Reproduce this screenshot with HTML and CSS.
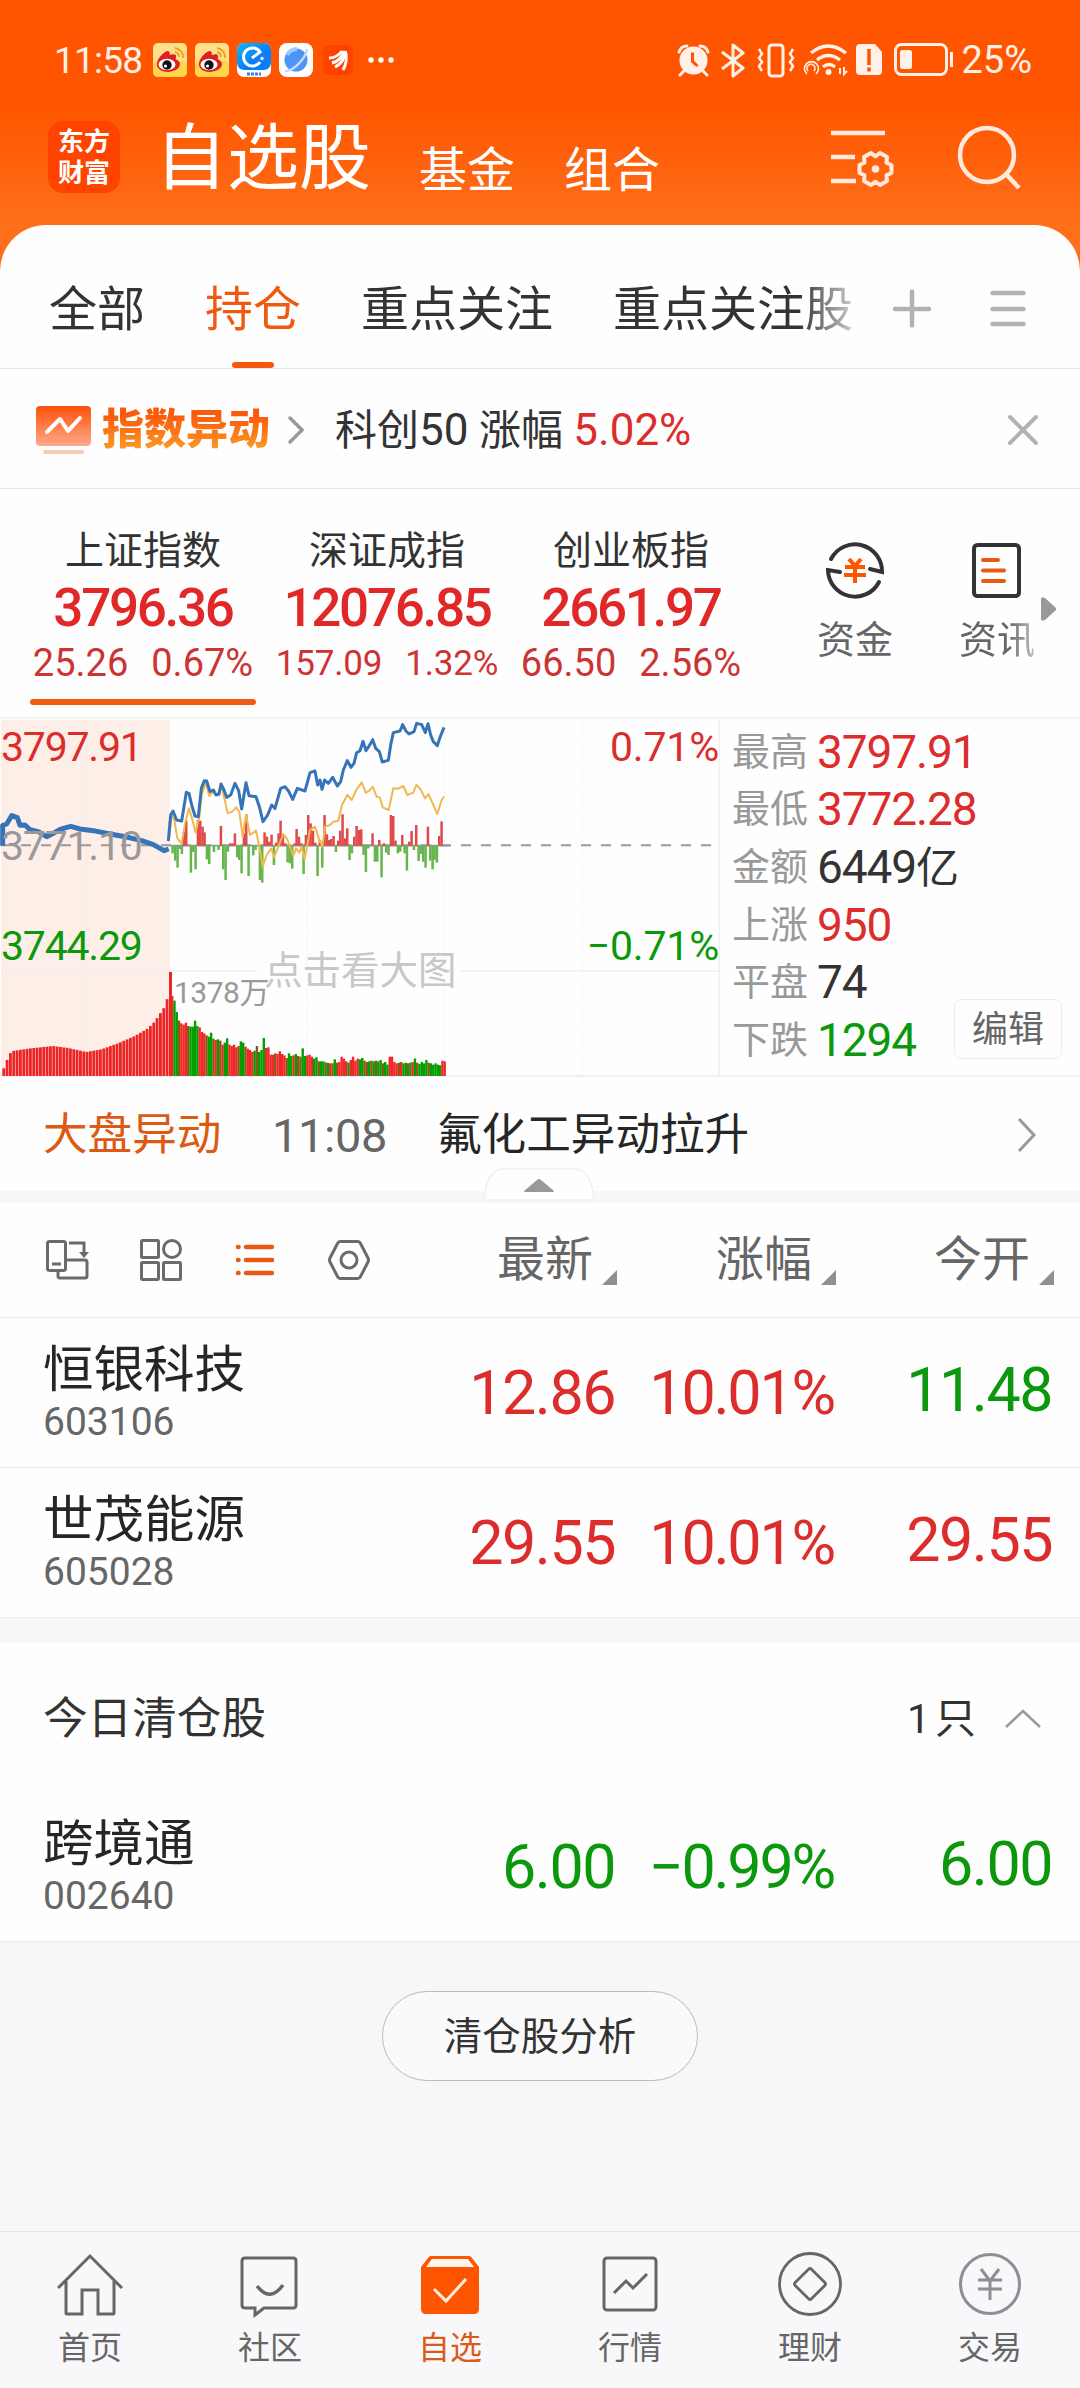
FILE: index.html
```html
<!DOCTYPE html>
<html lang="zh-CN">
<head>
    <meta charset="UTF-8">
    <meta name="viewport" content="width=device-width, initial-scale=1.0">
    <title>自选股</title>
    <link rel="stylesheet" href="styles.css">
</head>
<body>
    <div class="header">
        <div class="status-bar">
            <span class="status-time">11:58</span>
            <div class="status-apps">
                <svg width="34" height="34" viewBox="0 0 34 34">
                    <rect width="34" height="34" rx="5" fill="#ffe08a"/>
                    <rect y="18" width="34" height="16" rx="5" fill="#ffd54a"/>
                    <path d="M22 5a9 9 0 0 1 8 10M22 9a5 5 0 0 1 4 5" fill="none" stroke="#f0a020" stroke-width="2"/>
                    <path d="M4 20c1-6 8-12 11-12 3 1 1 4 2 4 3-1 6-1 6 1s-1 3 1 4c6 3 3 11-9 12C8 29 3 25 4 20z" fill="#e01f22"/>
                    <ellipse cx="14" cy="21.500" rx="8.500" ry="5.800" fill="#fff"/>
                    <circle cx="14" cy="22" r="4.700" fill="#111"/>
                    <circle cx="12.500" cy="23" r="1.600" fill="#fff"/>
                </svg>
                <svg width="34" height="34" viewBox="0 0 34 34">
                    <rect width="34" height="34" rx="5" fill="#ffe08a"/>
                    <rect y="18" width="34" height="16" rx="5" fill="#ffd54a"/>
                    <path d="M22 5a9 9 0 0 1 8 10M22 9a5 5 0 0 1 4 5" fill="none" stroke="#f0a020" stroke-width="2"/>
                    <path d="M4 20c1-6 8-12 11-12 3 1 1 4 2 4 3-1 6-1 6 1s-1 3 1 4c6 3 3 11-9 12C8 29 3 25 4 20z" fill="#e01f22"/>
                    <ellipse cx="14" cy="21.500" rx="8.500" ry="5.800" fill="#fff"/>
                    <circle cx="14" cy="22" r="4.700" fill="#111"/>
                    <circle cx="12.500" cy="23" r="1.600" fill="#fff"/>
                </svg>
                <svg width="34" height="34" viewBox="0 0 34 34">
                    <defs>
                        <linearGradient id="blueApp" x1="0" y1="0" x2="1" y2="1">
                            <stop offset="0" stop-color="#0cb8f5"/>
                            <stop offset="0.600" stop-color="#0a7df8"/>
                        </linearGradient>
                    </defs>
                    <rect width="34" height="34" rx="7" fill="#fff"/>
                    <path d="M0 7a7 7 0 0 1 7-7h20a7 7 0 0 1 7 7v12q0 7-7 8H7q-7-1-7-8z" fill="url(#blueApp)"/>
                    <path d="M15 15l8-6a9 9 0 1 0 0 10" fill="none" stroke="#fff" stroke-width="3"/>
                    <circle cx="25" cy="15.500" r="1.700" fill="#fff"/>
                    <path d="M10 31h14" stroke="#2c8ad8" stroke-width="3" stroke-dasharray="3 1"/>
                </svg>
                <svg width="34" height="34" viewBox="0 0 34 34">
                    <rect width="34" height="34" rx="8" fill="#fff"/>
                    <circle cx="17" cy="17" r="11.500" fill="#4c94f5"/>
                    <path d="M8 12a12 12 0 0 1 10-6" stroke="#9cc8ff" stroke-width="4" fill="none"/>
                    <path d="M6 28c7 1 21-12 22-22" stroke="#c5dcff" stroke-width="2.500" fill="none"/>
                </svg>
                <svg width="34" height="34" viewBox="0 0 34 34">
                    <rect x="2" y="2" width="30" height="30" rx="6" fill="#ff4200"/>
                    <g fill="none" stroke="#fff" stroke-width="3">
                        <path d="M8 15q8 0 13-7"/>
                        <path d="M11 20q9-2 12-12"/>
                        <path d="M14 24q9-4 10.500-16"/>
                        <path d="M22 27q5-9 2.500-18"/>
                    </g>
                </svg>
                <svg width="34" height="34" viewBox="0 0 34 34">
                    <g fill="#fff"><circle cx="8" cy="17" r="2.700"/><circle cx="18" cy="17" r="2.700"/><circle cx="28" cy="17" r="2.700"/></g>
                </svg>
            </div>
            <div class="status-right">
                <!-- alarm, bluetooth, vibrate, wifi, sim, battery -->
                <svg width="278" height="36" viewBox="677 42 278 36" fill="none" stroke="#fff1e8" stroke-width="3">
                    <circle cx="693.500" cy="60.500" r="14" fill="#fff1e8" stroke="none"/>
                    <path d="M679 52q2-6 8-6M708 52q-2-6-8-6M684 71l-4 4M703 71l4 4" stroke-linecap="round"/>
                    <path d="M692.500 52.500v9l5 4.500" stroke="#ff5500"/>
                    <path d="M722 52l21 16-10 8V45l10 8-21 16" stroke-linejoin="round"/>
                    <rect x="769" y="45" width="14" height="31" rx="3"/>
                    <path d="M759 49l3 5-3 4 3 4-3 4 3 5M793 49l-3 5 3 4-3 4 3 4-3 5" stroke-width="2.500"/>
                    <path d="M811 53q17-14 35 0M817 60q11-9 23 0M823 67q6-5 12 0" stroke-width="3.200"/>
                    <circle cx="828.500" cy="72" r="3" fill="#fff1e8" stroke="none"/>
                    <path d="M807 74a7 7 0 1 1 9 0M808 71a4 4 0 1 1 6 0" stroke-width="1.600"/>
                    <path d="M840 68v6M844 67v7l3-3" stroke-width="2"/>
                    <path d="M860 44h15l7 8v19a4 4 0 0 1-4 4h-18a4 4 0 0 1-4-4V48a4 4 0 0 1 4-4z" fill="#fff1e8" stroke="none"/>
                    <path d="M869 49v16M869 67.500v4" stroke="#ff5500" stroke-width="3.500"/>
                    <rect x="895.500" y="44.500" width="51" height="30" rx="6"/>
                    <rect x="900" y="50" width="12" height="19" rx="2.500" fill="#fff1e8" stroke="none"/>
                    <path d="M951.500 52v15"/>
                </svg>
                <span>25%</span>
            </div>
        </div>
        <div class="title-bar">
            <div class="logo"><span>东方</span><span>财富</span></div>
            <div class="titles">
                <span class="title-main">自选股</span>
                <span>基金</span>
                <span>组合</span>
            </div>
            <div class="title-icons">
                <svg width="64" height="64" viewBox="830 125 64 64" fill="none" stroke="#ffe9dc" stroke-width="4.500">
                    <path d="M831 133h54M831 157h24M831 181h25"/>
                    <path d="M16 4L11 6.300 11.500 12 4.500 16 0 12.700-4.500 16-11.500 12-11 6.300-16 4v-8L-11-6.300-11.500-12-4.500-16 0-12.700 4.500-16 11.500-12 11-6.300 16-4z" transform="translate(875.500 169)" stroke-width="4" stroke-linejoin="round"/>
                    <circle cx="875.500" cy="169" r="3.800" fill="#ffe9dc" stroke="none"/>
                </svg>
                <svg width="64" height="66" viewBox="957 123 64 66" fill="none" stroke="#ffe9dc" stroke-width="4.500">
                    <circle cx="987" cy="154" r="27"/>
                    <path d="M1006 173l13 14"/>
                </svg>
            </div>
        </div>
    </div>

    <div class="card">
        <div class="tabs">
            <div class="tab-list">
                <span>全部</span>
                <span class="active">持仓</span>
                <span>重点关注</span>
                <span>重点关注股</span>
            </div>
            <svg width="140" height="42" viewBox="890 288 140 42" fill="none" stroke="#b2b2b2" stroke-width="4.500" stroke-linecap="round">
                <path d="M895 309h34M912 291.500v34"/>
                <path d="M992.500 293h31M992.500 309h31M992.500 324h31"/>
            </svg>
        </div>

        <div class="notice">
            <svg width="55" height="50" viewBox="0 0 55 50">
                <defs>
                    <linearGradient id="noticeBg" x1="0" y1="0" x2="0" y2="1">
                        <stop offset="0" stop-color="#fb5207"/>
                        <stop offset="1" stop-color="#ffa98c"/>
                    </linearGradient>
                </defs>
                <rect y="1" width="55" height="40" rx="4" fill="url(#noticeBg)"/>
                <path d="M11 27l13-13 8 12 12-13" fill="none" stroke="#fff" stroke-width="4" stroke-linecap="round" stroke-linejoin="round"/>
                <path d="M9 47h37" stroke="#f8cab8" stroke-width="4" stroke-linecap="round"/>
            </svg>
            <span class="notice-title">指数异动</span>
            <svg width="18" height="30" viewBox="0 0 18 30" fill="none" stroke="#999" stroke-width="3.500" stroke-linecap="round">
                <path d="M3 3l12 12L3 27"/>
            </svg>
            <div class="notice-text">科创<span class="num">50</span> 涨幅 <span class="num red">5.02%</span></div>
            <svg width="32" height="32" viewBox="0 0 32 32" stroke="#b2b2b2" stroke-width="4" stroke-linecap="round">
                <path d="M3 3l26 26M29 3L3 29"/>
            </svg>
        </div>

        <div class="indexes">
            <div class="index active">
                <div class="index-name">上证指数</div>
                <div class="index-value">3796.36</div>
                <div class="index-change"><span>25.26</span><span>0.67%</span></div>
            </div>
            <div class="index">
                <div class="index-name">深证成指</div>
                <div class="index-value">12076.85</div>
                <div class="index-change small"><span>157.09</span><span>1.32%</span></div>
            </div>
            <div class="index">
                <div class="index-name">创业板指</div>
                <div class="index-value">2661.97</div>
                <div class="index-change"><span>66.50</span><span>2.56%</span></div>
            </div>
            <div class="shortcut">
                <svg width="62" height="62" viewBox="0 0 62 62" fill="none" stroke="#333" stroke-width="4">
                    <path d="M7 20A27 27 0 0 1 58 33l-12-3" stroke-linecap="round"/>
                    <path d="M55 43A27 27 0 0 1 4 31l12 2" stroke-linecap="round"/>
                    <path d="M25 20l6 7 6-7M21 28h20M20 36h22M31 27v17" stroke="#ff5500" stroke-width="4"/>
                </svg>
                <span>资金</span>
            </div>
            <div class="shortcut">
                <svg width="62" height="62" viewBox="0 0 62 62" fill="none" stroke="#333" stroke-width="4">
                    <rect x="8" y="6" width="45" height="51" rx="3.500"/>
                    <path d="M17 21h15M17 31.500h21M17 42h21" stroke="#e85a14" stroke-linecap="round"/>
                </svg>
                <span class="fade">资讯</span>
            </div>
            <svg class="more" width="16" height="26" viewBox="0 0 16 26"><path d="M0 3q0-3 4-1l11 10v2L4 24q-4 2-4-1z" fill="#999"/></svg>
        </div>

        <div class="market">
            <div class="chart">
                <svg id="chart" width="720" height="358" viewBox="0 57 2160 1074">
                    <rect x="3" y="60" width="507" height="1068" fill="#fdeee8"/>
                    <path d="M260 60V1128M921 60V1128M1334 60V1128M1746 60V1128" stroke="#e8e8e8" stroke-width="3" stroke-dasharray="3 6"/>
                    <path d="M3 813H772M1382 813H2160M0 1128H2160M2158 57V1128" stroke="#efefef" stroke-width="5"/>
                    <path d="M3 436H2140" stroke="#999" stroke-width="6" stroke-dasharray="30 30"/>
                    <g id="volume"></g>
                    <path d="M510 437H1352" stroke="#999" stroke-width="5"/>
                    <g id="flow"></g>
                    <path d="M507 420L515 345L523 360L532 415L545 430L555 370L567 325L576 355L587 398L598 350L606 280L617 250L628 288L640 275L652 285L663 255L672 290L683 340L697 335L708 322L718 335L728 410L738 345L750 405L768 392L778 440L788 500L800 465L814 445L822 472L835 440L850 402L862 418L880 468L888 445L898 458L905 440L914 478L930 390L945 380L958 420L967 440L975 380L990 375L1000 365L1015 362L1026 315L1042 285L1055 300L1070 268L1085 247L1097 278L1108 272L1118 260L1130 290L1140 293L1148 322L1166 330L1180 265L1195 266L1210 258L1222 285L1240 278L1249 255L1262 268L1275 295L1285 282L1298 310L1312 342L1325 300L1332 290" fill="none" stroke="#f0b84e" stroke-width="6" stroke-linejoin="round"/>
                    <path d="M8 437V376L20 372L35 347L52 353L60 376L75 375L88 388L115 395L140 410L160 400L180 388L212 379L240 387L280 392L330 402L380 411L425 422L460 434L492 452L506 447" fill="none" stroke="#3674b9" stroke-width="15" stroke-linejoin="round"/>
                    <path d="M505 423L512 345L519 333L530 360L545 363L552 320L559 277L567 280L575 315L585 348L595 350L604 265L613 242L620 243L630 275L640 270L648 285L657 283L663 252L672 270L680 292L692 285L705 250L716 272L725 327L738 248L747 287L768 290L778 320L789 365L803 345L815 315L825 325L842 265L855 260L865 272L878 298L892 265L915 273L930 218L945 213L953 255L960 240L966 268L974 240L985 250L998 232L1012 258L1022 245L1030 210L1042 182L1053 202L1062 190L1070 158L1080 152L1089 124L1098 152L1108 137L1118 119L1127 145L1138 155L1147 186L1165 181L1173 130L1180 98L1200 93L1208 74L1218 93L1227 102L1242 95L1250 70L1265 74L1276 98L1284 71L1292 105L1300 125L1312 137L1320 112L1332 82" fill="none" stroke="#3674b9" stroke-width="9" stroke-linejoin="round"/>
                </svg>
                <span class="label top red">3797.91</span>
                <span class="label middle">3771.10</span>
                <span class="label bottom green">3744.29</span>
                <span class="label top right red">0.71%</span>
                <span class="label bottom right green">−0.71%</span>
                <span class="label volume-max">1378万</span>
                <span class="label hint">点击看大图</span>
            </div>
            <div class="stats">
                <div><label>最高</label><b class="red">3797.91</b></div>
                <div><label>最低</label><b class="red">3772.28</b></div>
                <div><label>金额</label><b>6449<i>亿</i></b></div>
                <div><label>上涨</label><b class="red">950</b></div>
                <div><label>平盘</label><b>74</b></div>
                <div><label>下跌</label><b class="green">1294</b></div>
                <button class="edit">编辑</button>
            </div>
        </div>

        <div class="news">
            <span class="news-tag">大盘异动</span>
            <span class="news-time">11:08</span>
            <span class="news-text">氟化工异动拉升</span>
            <svg width="20" height="36" viewBox="0 0 20 36" fill="none" stroke="#999" stroke-width="3"><path d="M2 2l15 16L2 34"/></svg>
        </div>
        <div class="divider">
            <svg class="collapse" width="112" height="34" viewBox="0 0 112 34">
                <path d="M1 32Q4 1 20 1h72q16 0 19 31z" fill="#fefefe" stroke="#f0f0f2" stroke-width="1.500"/>
                <path d="M41 23l13-11q2-2 4 0l13 11q0 1-1 1H42q-1 0-1-1z" fill="#999"/>
            </svg>
        </div>

        <div class="toolbar">
            <div class="view-icons">
                <svg width="44" height="44" viewBox="0 0 44 44" fill="none" stroke="#6b6b6b" stroke-width="3">
                    <rect x="2.500" y="3.500" width="18" height="29" rx="2"/>
                    <path d="M7 26h9M24 5h15v12M13 33v5a2 2 0 0 0 2 2h25a2 2 0 0 0 2-2V24a2 2 0 0 0-2-2H21"/>
                    <path d="M34 14h10l-5 6z" fill="#6b6b6b" stroke="none"/>
                </svg>
                <svg width="44" height="44" viewBox="0 0 44 44" fill="none" stroke="#6b6b6b" stroke-width="3">
                    <rect x="2.500" y="2.500" width="17" height="17" rx="1"/>
                    <circle cx="33" cy="11" r="8.500"/>
                    <rect x="2.500" y="24.500" width="17" height="17" rx="1"/>
                    <rect x="24.500" y="24.500" width="17" height="17" rx="1"/>
                </svg>
                <svg width="44" height="44" viewBox="0 0 44 44" fill="none" stroke="#e85a14" stroke-width="4.500" stroke-linecap="round">
                    <path d="M5 9h.5M13 9h26M5 22h.5M13 22h26M5 35h.5M13 35h26"/>
                </svg>
                <svg width="44" height="44" viewBox="0 0 44 44" fill="none" stroke="#6b6b6b" stroke-width="3">
                    <path d="M13 3.500h18q1.500 0 2.500 2L41 20q1 2 0 4l-7.500 14.500q-1 2-2.500 2H13q-1.500 0-2.500-2L3 24q-1-2 0-4l7.500-14.500q1-2 2.500-2z"/>
                    <circle cx="22" cy="22" r="8"/>
                </svg>
            </div>
            <div class="sort">最新</div>
            <div class="sort">涨幅</div>
            <div class="sort">今开</div>
        </div>

        <div class="stock">
            <div class="stock-name">恒银科技<small>603106</small></div>
            <div class="price red">12.86</div>
            <div class="price rate red">10.01%</div>
            <div class="price open green">11.48</div>
        </div>
        <div class="stock">
            <div class="stock-name">世茂能源<small>605028</small></div>
            <div class="price red">29.55</div>
            <div class="price rate red">10.01%</div>
            <div class="price open red">29.55</div>
        </div>
        <div class="gap"></div>
        <div class="section-head">
            <span>今日清仓股</span>
            <div class="section-count"><span>1</span>只
                <svg width="36" height="20" viewBox="0 0 36 20" fill="none" stroke="#999" stroke-width="2.500"><path d="M1 18L18 2l17 16"/></svg>
            </div>
        </div>
        <div class="stock">
            <div class="stock-name">跨境通<small>002640</small></div>
            <div class="price green">6.00</div>
            <div class="price rate green">−0.99%</div>
            <div class="price open green">6.00</div>
        </div>
    </div>

    <div class="footer-area">
        <button class="analysis">清仓股分析</button>
    </div>

    <div class="nav">
        <div class="nav-item">
            <svg width="66" height="66" viewBox="0 0 66 66" fill="none" stroke="#666" stroke-width="3">
                <path d="M1 36L33 4l32 32M9 29v32q0 1 1 1h15V38h16v24h15q1 0 1-1V29"/>
            </svg>
            <span>首页</span>
        </div>
        <div class="nav-item">
            <svg width="66" height="66" viewBox="0 0 66 66" fill="none" stroke="#666" stroke-width="3">
                <path d="M8 6h48q3 0 3 3v44q0 3-3 3H27l-9 7v-7H8q-3 0-3-3V9q0-3 3-3z"/>
                <path d="M20 34q13 17 26-1" stroke-width="3.500"/>
            </svg>
            <span>社区</span>
        </div>
        <div class="nav-item active">
            <svg width="66" height="66" viewBox="0 0 66 66">
                <path d="M14 4h38q2 0 3 2l7 9v42q0 5-5 5H9q-5 0-5-5V15l7-9q1-2 3-2z" fill="#ff5500"/>
                <path d="M15 7h36l6 8H9z" fill="#fff5ef"/>
                <path d="M17 37l12 12 20-22" fill="none" stroke="#fff0e5" stroke-width="3"/>
            </svg>
            <span>自选</span>
        </div>
        <div class="nav-item">
            <svg width="66" height="66" viewBox="0 0 66 66" fill="none" stroke="#666" stroke-width="3">
                <rect x="7" y="6" width="52" height="52" rx="3"/>
                <path d="M17 41l12-12 7 7 14-14"/>
            </svg>
            <span>行情</span>
        </div>
        <div class="nav-item">
            <svg width="66" height="66" viewBox="0 0 66 66" fill="none" stroke="#666" stroke-width="2.800">
                <circle cx="33" cy="32" r="30.500"/>
                <rect x="21.500" y="20.500" width="23" height="23" rx="2" transform="rotate(45 33 32)"/>
            </svg>
            <span>理财</span>
        </div>
        <div class="nav-item">
            <svg width="66" height="66" viewBox="0 0 66 66" fill="none" stroke="#8f8f93" stroke-width="3">
                <circle cx="33" cy="32" r="29.500"/>
                <path d="M24 17l9 12 9-12M21 28h24M21 37h24M33 28v20"/>
            </svg>
            <span>交易</span>
        </div>
    </div>

    <script>
        const NS = 'http://www.w3.org/2000/svg';
        const base = 1128;
        const zero = 437;
        const step = 6.87;

        function bar(group, x, y, w, h, fill) {
            const rect = document.createElementNS(NS, 'rect');
            rect.setAttribute('x', x);
            rect.setAttribute('y', y);
            rect.setAttribute('width', w);
            rect.setAttribute('height', h);
            rect.setAttribute('fill', fill);
            document.getElementById(group).appendChild(rect);
        }

        // auction part: tops of the bars, interpolated between these points
        const auction = [[7, 1105], [17, 1080], [26, 1060], [35, 1053], [80, 1046], [155, 1038], [200, 1044], [255, 1056], [300, 1048], [350, 1030], [400, 1008], [440, 985], [460, 965], [480, 935], [490, 920], [500, 888]];
        for (let x = 7; x < 505; x += 10) {
            let k = 0;
            while (k < auction.length - 2 && auction[k + 1][0] < x) k++;
            const [x0, y0] = auction[k];
            const [x1, y1] = auction[k + 1];
            const y = y0 + (y1 - y0) * (x - x0) / (x1 - x0);
            bar('volume', x, y, 8.5, base - y, '#ee2525');
        }
        bar('volume', 507, 816, 9, base - 816, '#ee2525');

        const colors = { r: '#f02828', g: '#00a000', o: '#8a5a14' };
        const volume = '888r 902g 936g 962o 970r 974r 968r 978o 980g 980g 962g 978g 982r 996r 1000r 1006o 1010g 998g 1016o 1020r 1018g 1022o 1034r 1028g 1015g 1034r 1038r 1034r 1042r 1038o 1024g 1028g 1040o 1046r 1050r 1056r 1052g 1038o 1056g 1050g 1014g 1044r 1042r 1064r 1064r 1060o 1062r 1054r 1062r 1066r 1074o 1060g 1068g 1066r 1062g 1068o 1070o 1045g 1068g 1066r 1064r 1070r 1076g 1072g 1084o 1084g 1084g 1087o 1089g 1090r 1090o 1078g 1088o 1086r 1070r 1076r 1084r 1088g 1080r 1070r 1082r 1076r 1078g 1074g 1082o 1086o 1084g 1082o 1084g 1082o 1084g 1080g 1090o 1086g 1094g 1070r 1070r 1086r 1090r 1088o 1086r 1090g 1088g 1090o 1088g 1086r 1076g 1088o 1092g 1086g 1090g 1080g 1088o 1090g 1094g 1090g 1094g 1096g 1082r 1084r';
        volume.split(' ').forEach((item, i) => {
            const y = parseInt(item);
            bar('volume', 513 + i * step, y, step + 0.3, base - y, colors[item.slice(-1)]);
        });

        // money flow around the zero line
        const flow = [[518, 460], [526, 482], [533, 503], [540, 447], [546, 462], [552, 395], [559, 362], [573, 518], [580, 456], [587, 508], [594, 360], [601, 362], [608, 380], [614, 397], [621, 478], [628, 492], [642, 456], [656, 450], [663, 378], [670, 508], [677, 540], [684, 455], [691, 430], [698, 430], [705, 400], [712, 472], [718, 480], [725, 520], [732, 400], [739, 343], [746, 528], [760, 466], [767, 450], [780, 540], [787, 548], [794, 397], [801, 410], [808, 425], [815, 404], [822, 495], [829, 428], [836, 400], [842, 362], [849, 405], [856, 430], [863, 487], [870, 490], [877, 506], [884, 430], [890, 387], [897, 410], [904, 430], [911, 522], [918, 405], [925, 345], [932, 370], [939, 392], [946, 428], [953, 528], [960, 420], [967, 503], [974, 345], [981, 403], [988, 420], [994, 417], [1001, 408], [1008, 456], [1015, 422], [1021, 392], [1028, 343], [1035, 415], [1042, 385], [1049, 480], [1056, 460], [1063, 410], [1070, 378], [1077, 390], [1084, 388], [1091, 465], [1098, 516], [1105, 445], [1118, 400], [1125, 485], [1132, 485], [1138, 420], [1145, 532], [1152, 430], [1159, 458], [1166, 465], [1173, 345], [1180, 348], [1187, 422], [1194, 460], [1201, 455], [1207, 405], [1214, 460], [1221, 512], [1228, 425], [1235, 393], [1242, 450], [1249, 375], [1256, 483], [1263, 462], [1270, 485], [1277, 503], [1284, 380], [1291, 482], [1298, 508], [1304, 480], [1311, 488], [1318, 408], [1325, 364]];
        flow.forEach(([x, y]) => {
            if (y < zero) bar('flow', x - 4, y, 7.5, zero - y, '#e04a4a');
            else bar('flow', x - 4, zero, 7.5, y - zero, '#66b54e');
        });
    </script>
</body>
</html>
```
FILE: styles.css
```css
* {
    box-sizing: border-box;
}

body {
    margin: 0;
    width: 1080px;
    height: 2388px;
    display: flex;
    flex-direction: column;
    background: #f6f7f9;
    color: #333;
    font-family: Roboto, "Noto Sans CJK SC", sans-serif;
    font-size: 48px;
    line-height: 1;
    overflow: hidden;
}

svg {
    display: block;
    flex: none;
}

button {
    font-family: inherit;
    line-height: 1;
    padding: 2px 0 0;
}

.red {
    color: #dc2c2c;
}

.green {
    color: #0c980c;
}

/* header */
.header {
    height: 275px;
    margin-bottom: -50px;
    background: linear-gradient(#ff5500 0, #ff5500 105px, #ff6f1a 225px);
    color: #fff;
}

.status-bar {
    display: flex;
    align-items: center;
    height: 118px;
    padding: 2px 48px 0 54px;
    color: #fff1e8;
    font-size: 37px;
}

.status-time {
    width: 99px;
    letter-spacing: -0.8px;
}

.status-apps {
    display: flex;
    gap: 8px;
}

.status-right {
    display: flex;
    align-items: center;
    gap: 6px;
    margin-left: auto;
    font-size: 38px;
}

.title-bar {
    display: flex;
    align-items: center;
    height: 78px;
    padding: 0 59px 0 48px;
}

.logo {
    display: flex;
    flex-direction: column;
    align-items: center;
    justify-content: center;
    gap: 5px;
    width: 72px;
    height: 72px;
    border-radius: 15px;
    background: #ff4400;
    font-size: 26px;
    font-weight: 700;
}

.titles {
    display: flex;
    align-items: flex-end;
    margin-left: 35px;
    gap: 49px;
    padding-top: 4px;
}

.title-main {
    font-size: 72px;
    margin-right: -1px;
}

.title-icons {
    display: flex;
    align-items: center;
    gap: 63px;
    margin-left: auto;
}

.card {
    background: #fefefe;
    border-radius: 46px 46px 0 0;
}

/* group tabs */
.tabs {
    display: flex;
    align-items: center;
    height: 144px;
    padding: 24px 50px 0 49px;
    border-bottom: 1px solid #e4e4e4;
}

.tab-list {
    display: flex;
    align-items: center;
    gap: 60px;
    width: 803px;
    height: 120px;
    padding-top: 3px;
    margin-right: 38px;
    overflow: hidden;
    white-space: nowrap;
    -webkit-mask-image: linear-gradient(90deg, #000 750px, rgba(0, 0, 0, 0.25) 803px);
    mask-image: linear-gradient(90deg, #000 750px, rgba(0, 0, 0, 0.25) 803px);
}

.tab-list .active {
    position: relative;
    color: #f05a10;
}

.tab-list .active::after {
    content: "";
    position: absolute;
    left: 27px;
    bottom: -34px;
    width: 42px;
    height: 6px;
    border-radius: 3px;
    background: #f55a0c;
}

/* notice line */
.notice {
    display: flex;
    align-items: center;
    height: 120px;
    padding: 2px 41px 0 36px;
    border-bottom: 1px solid #e4e4e4;
}

.notice-title {
    width: 185px;
    margin-left: 11px;
    font-size: 42px;
    font-weight: 900;
    background: linear-gradient(#fb5a0c 20%, #fb9a24 90%);
    -webkit-background-clip: text;
    background-clip: text;
    color: transparent;
    line-height: 50px;
}

.notice-text {
    flex: 1;
    margin-left: 30px;
    font-size: 42px;
}

.notice-text .num {
    font-size: 44px;
}

/* indexes */
.indexes {
    display: flex;
    height: 228px;
    padding-left: 21px;
}

.index {
    display: flex;
    flex-direction: column;
    align-items: center;
    width: 244px;
    padding-top: 43px;
}

.index.active {
    position: relative;
}

.index.active::after {
    content: "";
    position: absolute;
    left: 9px;
    top: 210px;
    width: 226px;
    height: 6px;
    border-radius: 3px;
    background: #f25c12;
}

.index-name {
    font-size: 39px;
}

.index-value {
    margin-top: 11px;
    font-size: 53px;
    font-weight: 500;
    letter-spacing: -2.3px;
    color: #e02828;
}

.index-change {
    display: flex;
    align-items: center;
    gap: 23px;
    height: 38px;
    margin-top: 9px;
    font-size: 38px;
    color: #cc3333;
}

.index-change.small {
    font-size: 35px;
    letter-spacing: -0.2px;
}

.shortcut {
    display: flex;
    flex-direction: column;
    align-items: center;
    gap: 20px;
    width: 142px;
    padding-top: 50px;
    font-size: 38px;
    color: #666;
}

.index + .shortcut {
    margin-left: 31px;
}

.shortcut .fade {
    -webkit-mask-image: linear-gradient(90deg, #000 65%, rgba(0, 0, 0, 0.4));
    mask-image: linear-gradient(90deg, #000 65%, rgba(0, 0, 0, 0.4));
}

.more {
    margin: 107px 0 0 -27px;
}

/* chart and market numbers */
.market {
    display: flex;
    height: 360px;
    border-top: 2px solid #f4f4f4;
    border-bottom: 2px solid #f2f2f2;
}

.chart {
    position: relative;
    width: 720px;
}

.label {
    position: absolute;
    left: 1px;
    font-size: 41px;
    letter-spacing: -1.2px;
}

.label.right {
    left: auto;
    right: 1px;
    letter-spacing: -0.2px;
}

.label.top {
    top: 8px;
}

.label.middle {
    top: 107px;
    color: #999;
}

.label.bottom {
    top: 207px;
}

.label.volume-max {
    left: 174px;
    top: 259px;
    font-size: 30px;
    letter-spacing: -0.5px;
    color: #999;
}

.label.hint {
    left: 264px;
    top: 233px;
    font-size: 38.5px;
    letter-spacing: 0;
    color: #c8c8c8;
}

.stats {
    position: relative;
    flex: 1;
    padding: 4px 0 0 12px;
}

.stats div {
    display: flex;
    align-items: center;
    height: 57.6px;
}

.stats label {
    width: 85px;
    font-size: 38px;
    color: #999;
}

.stats b {
    font-size: 46px;
    font-weight: 400;
    letter-spacing: -1.1px;
}

.stats i {
    font-style: normal;
    font-size: 43px;
}

.edit {
    position: absolute;
    right: 18px;
    bottom: 16px;
    width: 108px;
    height: 60px;
    border: 1px solid #ebebeb;
    border-radius: 7px;
    background: #fefefe;
    color: #666;
    font-size: 36px;
}

/* news */
.news {
    display: flex;
    align-items: center;
    height: 114px;
    padding: 2px 43px 0 43px;
    font-size: 44.6px;
}

.news-tag {
    width: 229px;
    color: #dc5a12;
}

.news-time {
    width: 165px;
    font-size: 47px;
    letter-spacing: -0.4px;
    color: #666;
}

.news-text {
    flex: 1;
    color: #262626;
}

.divider {
    position: relative;
    height: 12px;
    background: #f6f7f9;
}

.collapse {
    position: absolute;
    left: 483px;
    bottom: 1px;
}

/* stock table */
.toolbar,
.stock {
    display: grid;
    grid-template-columns: 330px 244px 219px 218px;
    align-items: center;
    padding-left: 43px;
    border-bottom: 1px solid #ebebeb;
}

.toolbar {
    height: 115px;
}

.view-icons {
    display: flex;
    gap: 50px;
    padding-left: 2px;
}

.sort {
    display: flex;
    align-items: center;
    justify-content: flex-end;
    gap: 9px;
    color: #666;
}

.sort::after {
    content: "";
    margin-top: 35px;
    border-left: 15px solid transparent;
    border-bottom: 15px solid #8f8f94;
}

.stock {
    height: 150px;
    padding-top: 2px;
}

.stock-name {
    font-size: 50.5px;
    color: #262626;
    white-space: nowrap;
}

.stock-name small {
    display: block;
    margin-top: 8px;
    font-size: 39px;
    color: #666;
}

.price {
    padding-right: 2px;
    font-size: 61px;
    letter-spacing: -1.5px;
    text-align: right;
}

.price.rate {
    letter-spacing: -2.2px;
}

.price.open {
    margin-top: -6px;
}

.gap {
    height: 24px;
    background: #f6f7f9;
}

.section-head {
    display: flex;
    align-items: center;
    justify-content: space-between;
    height: 150px;
    padding: 4px 39px 0 43px;
    font-size: 44.6px;
}

.section-count {
    display: flex;
    align-items: center;
    font-size: 41px;
}

.section-count span {
    margin-right: 5px;
}

.section-count svg {
    margin-left: 29px;
}

.footer-area {
    flex: 1;
    padding-top: 49px;
    text-align: center;
}

.analysis {
    width: 316px;
    height: 90px;
    border: 1px solid #bbb;
    border-radius: 45px;
    background: #fafafb;
    color: #333;
    font-size: 38.5px;
}

/* bottom navigation */
.nav {
    display: grid;
    grid-template-columns: repeat(6, 1fr);
    height: 157px;
    border-top: 1px solid #e2e4e6;
    background: #f8f8fa;
}

.nav-item {
    display: flex;
    flex-direction: column;
    align-items: center;
    gap: 14px;
    padding-top: 20px;
    font-size: 32px;
    color: #666;
}

.nav-item.active {
    color: #dc5a18;
}
```
